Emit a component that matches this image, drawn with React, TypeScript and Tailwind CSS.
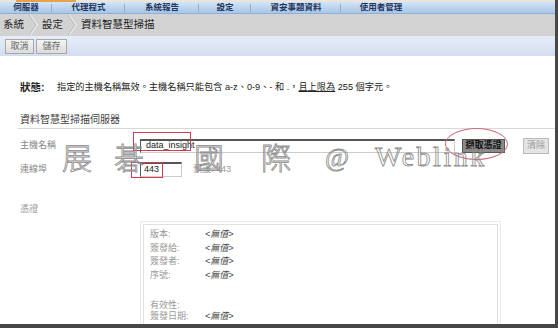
const cjk = { fontFamily: '"Liberation Sans", "Noto Sans CJK TC", sans-serif' }

const navItems = [
  { label: "伺服器", w: "w-[52px]" },
  { label: "代理程式", w: "w-[73px]" },
  { label: "系統報告", w: "w-[74px]" },
  { label: "設定", w: "w-[52px]" },
  { label: "資安事題資料", w: "w-[90px]" },
  { label: "使用者管理", w: "w-[80px]" },
]

function Chevron() {
  return (
    <svg width="10" height="22" viewBox="0 0 10 22" className="mx-[4px]">
      <path d="M2 1 L9 11 L2 21" fill="none" stroke="#efefef" strokeWidth="1.5" />
      <path d="M1 1 L8 11 L1 21" fill="none" stroke="#b5b5b5" strokeWidth="1" />
    </svg>
  )
}

function CertRow({ label, value, h = "h-[13.5px]", mt = "" }: { label: string; value: boolean; h?: string; mt?: string }) {
  return (
    <div className={`${h} ${mt} flex items-center text-[9px]`}>
      <span className="w-[55px] text-[#999]">{label}</span>
      {value && <span className="italic text-[#444]">&lt;無值&gt;</span>}
    </div>
  )
}

export default function App() {
  return (
    <div className="w-[558px] h-[328px] bg-white overflow-hidden" style={cjk}>
      <div className="relative w-[558px] h-[328px] border-r-[3px] border-b-[4px] border-[#474747] overflow-hidden">
        {/* top strip */}
        <div className="h-[2px] bg-[#e8e6df] flex">
          <div className="ml-[16px] w-[60px] bg-[#e9a24a]" />
        </div>
        {/* nav */}
        <div className="h-[12px] flex items-center bg-gradient-to-b from-[#d4e4f5] to-[#a8c6e6] border-b border-[#8fb0d6]">
          {navItems.map((n, i) => (
            <div key={n.label} className={`${n.w} h-full flex items-center justify-center relative`}>
              <span className="text-[8.5px] leading-none text-[#1d355f] font-semibold">{n.label}</span>
              {i < navItems.length - 1 && <span className="absolute right-0 top-[2px] h-[8px] w-px bg-[#8eaed3]" />}
            </div>
          ))}
        </div>
        {/* breadcrumb */}
        <div className="h-[22px] bg-[#d2d2d2] flex items-center pl-[3px] text-[10.5px] text-[#222]">
          <span>系統</span>
          <Chevron />
          <span>設定</span>
          <Chevron />
          <span>資料智慧型掃描</span>
        </div>
        {/* toolbar */}
        <div className="h-[20px] bg-gradient-to-b from-[#e6edf7] to-[#d2def0] flex items-center gap-[2px] pl-[5px]">
          <button className="h-[15px] w-[29px] text-[9px] leading-none text-[#666] bg-gradient-to-b from-[#f4f4f4] to-[#dcdcdc] border border-[#a8a8a8]">取消</button>
          <button className="h-[15px] w-[31px] text-[9px] leading-none text-[#666] bg-gradient-to-b from-[#f4f4f4] to-[#dcdcdc] border border-[#a8a8a8]">儲存</button>
        </div>

        {/* content */}
        <div className="pl-[18px]">
          <div className="mt-[25px] pl-[2px] flex items-center h-[14px] text-[9.2px] text-[#222]">
            <span className="font-bold text-[10.5px] w-[37px]">狀態:</span>
            <span>指定的主機名稱無效。主機名稱只能包含 a-z、0-9、- 和 .，<span className="underline">且上限為</span> 255 個字元。</span>
          </div>

          <div className="mt-[18px] pl-[2px] h-[16px] border-b border-[#d8d8d8] text-[10px] text-[#444] leading-[14px]">資料智慧型掃描伺服器</div>

          {/* host */}
          <div className="mt-[9px] flex items-center h-[15px]">
            <span className="w-[122px] pl-[2px] text-[9px] text-[#888]">主機名稱</span>
            <div className="w-[315px] h-[14px] border-t-2 border-l border-[#555] border-r border-b border-r-[#ccc] border-b-[#ccc] flex items-center pl-[5px] text-[9px] text-[#222]">data_insight</div>
            <button className="ml-[7px] w-[43px] h-[14px] bg-[#8a8a8a] border border-[#555] text-[9px] leading-none text-[#111] font-bold">擷取憑證</button>
            <button className="ml-[18px] w-[26px] h-[16px] bg-[#e4e4e4] border border-[#bbb] text-[9px] leading-none text-[#999]">清除</button>
          </div>

          {/* port */}
          <div className="mt-[9px] flex items-center h-[15px]">
            <span className="w-[122px] pl-[2px] text-[9px] text-[#888]">連線埠</span>
            <div className="w-[42px] h-[15px] border-t-2 border-l border-[#555] border-r border-b border-r-[#ccc] border-b-[#ccc] flex items-center pl-[3px] text-[9px] text-[#222]">443</div>
            <span className="ml-[11px] text-[9px] text-[#999]">預設: 443</span>
          </div>

          <div className="mt-[26px] pl-[2px] text-[9px] text-[#999] h-[12px] leading-[12px]">憑證</div>

          {/* certificate */}
          <div className="ml-[122px] mt-[6px] w-[361px] h-[110px] border border-[#eaeaea] p-[2px]">
            <div className="h-full border border-[#e2e2e2] pl-[6px] pt-[3px]">
              <CertRow label="版本:" value />
              <CertRow label="簽發給:" value />
              <CertRow label="簽發者:" value />
              <CertRow label="序號:" value />
              <CertRow label="有效性:" value={false} h="h-[11px]" mt="mt-[18px]" />
              <CertRow label="簽發日期:" value h="h-[11px]" />
            </div>
          </div>
        </div>

        {/* annotations */}
        <div className="absolute left-[133px] top-[132px] w-[58px] h-[19px] border border-[#d23a4a]" />
        <div className="absolute left-[131px] top-[162px] w-[32px] h-[16px] border border-[#d23a4a]" />
        <div className="absolute left-[445px] top-[128px] w-[63px] h-[32px] rounded-[50%] border border-[#c9707c]" />

        {/* watermark */}
        <div
          className="absolute left-[62px] top-[141px] flex items-end text-[30px] leading-none text-transparent [-webkit-text-stroke:0.8px_#8a8a8a] pointer-events-none"
          style={{ fontFamily: '"Noto Sans CJK TC", serif', fontWeight: 300 }}
        >
          <span className="w-[52px]">展</span>
          <span className="w-[80px]">碁</span>
          <span className="w-[67px]">國</span>
          <span className="w-[64px]">際</span>
          <span className="w-[50px] text-[26px]" style={{ fontFamily: '"Liberation Serif", serif' }}>@</span>
          <span className="text-[28px] tracking-[2.5px]" style={{ fontFamily: '"Liberation Serif", serif' }}>Weblink</span>
        </div>
      </div>
    </div>
  )
}
